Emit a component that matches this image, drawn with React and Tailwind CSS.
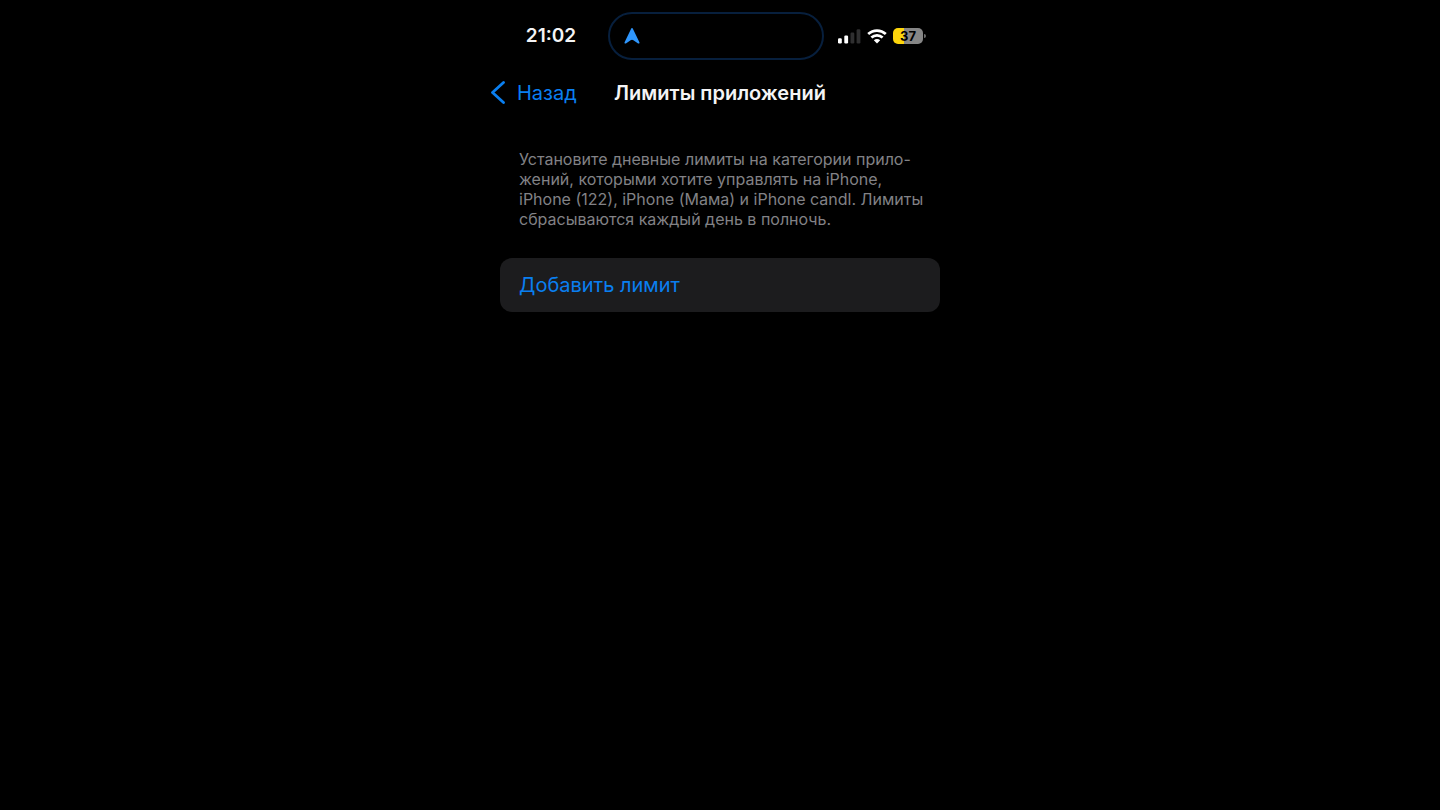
function SignalIcon() {
  return (
    <svg width="23" height="15" viewBox="0 0 23 15" aria-hidden="true">
      <rect x="0" y="9.2" width="3.8" height="5.3" rx="1.2" fill="#fff" />
      <rect x="6.3" y="6.6" width="3.8" height="7.9" rx="1.2" fill="#fff" />
      <rect x="12.5" y="3.6" width="3.8" height="10.9" rx="1.2" fill="#2f2f30" />
      <rect x="18.6" y="0.3" width="3.8" height="14.2" rx="1.2" fill="#2f2f30" />
    </svg>
  );
}

function WifiIcon() {
  return (
    <svg width="20" height="15" viewBox="0 0 20 15" aria-hidden="true">
      <g fill="none" stroke="#fff" strokeWidth="2.7">
        <path d="M1.2 5.1C6.2 0.4 13.8 0.4 18.8 5.1" />
        <path d="M4.4 8.6C7.6 5.6 12.4 5.6 15.6 8.6" />
      </g>
      <path d="M10 14.4L6.8 11.2C8.6 9.5 11.4 9.5 13.2 11.2Z" fill="#fff" />
    </svg>
  );
}

function Battery() {
  return (
    <div className="flex items-center gap-px">
      <div className="flex h-4 w-[30px] items-center justify-center rounded-[5px] bg-linear-to-r from-[#fdd50b] from-37% to-[#868686] to-37% text-[13px] leading-4 font-bold text-black">
        37
      </div>
      <div className="h-1 w-0.5 rounded-r-full bg-[#6b6b6b]" />
    </div>
  );
}

function StatusBar() {
  return (
    <div className="flex items-center pt-3 pr-2">
      <div className="flex-1 pl-3.5 text-center text-[19px] leading-7 font-semibold">21:02</div>
      <div className="flex h-12 w-[216px] items-center rounded-full border-2 border-[#071f3d] pl-[13px]">
        <svg width="18" height="18" viewBox="0 0 18 18" aria-hidden="true">
          <path
            d="M9 1C9.5 1 9.8 1.4 10 1.9L16.4 15.3C16.8 16.3 15.9 17 15.1 16.4L10.4 13.2Q9 12.3 7.6 13.2L2.9 16.4C2.1 17 1.2 16.3 1.6 15.3L8 1.9C8.2 1.4 8.5 1 9 1Z"
            fill="#2f96fc"
          />
        </svg>
      </div>
      <div className="flex flex-1 items-center gap-1.5 pl-3.5">
        <SignalIcon />
        <WifiIcon />
        <Battery />
      </div>
    </div>
  );
}

function NavBar() {
  return (
    <header className="mt-[17px] grid h-8 grid-cols-[1fr_auto_1fr] items-center">
      <a href="#back" className="flex items-center gap-[11px] pl-2.5 text-xl text-[#0a7ff0]">
        <svg width="16" height="24" viewBox="0 0 16 24" fill="none" aria-hidden="true">
          <path
            d="M13.5 1.5L2.5 11.5L13.5 21.5"
            stroke="currentColor"
            strokeWidth="2.8"
            strokeLinecap="round"
            strokeLinejoin="round"
          />
        </svg>
        Назад
      </a>
      <h1 className="text-xl font-semibold">Лимиты приложений</h1>
    </header>
  );
}

export default function App() {
  return (
    <div className="min-h-screen bg-black font-[Inter,sans-serif] text-[#f4f4f5]">
      <div className="mx-auto max-w-[480px]">
        <StatusBar />
        <NavBar />
        <main className="px-5">
          <p className="mt-10 pl-[19px] text-base leading-5 whitespace-nowrap text-[#828286]">
            Установите дневные лимиты на категории прило-
            <br />
            жений, которыми хотите управлять на iPhone,
            <br />
            iPhone (122), iPhone (Мама) и iPhone candl. Лимиты
            <br />
            сбрасываются каждый день в полночь.
          </p>
          <button
            type="button"
            className="mt-[29px] h-[54px] w-full rounded-xl bg-[#1c1c1e] px-[19px] text-left text-xl text-[#0a7ff0]"
          >
            Добавить лимит
          </button>
        </main>
      </div>
    </div>
  );
}
